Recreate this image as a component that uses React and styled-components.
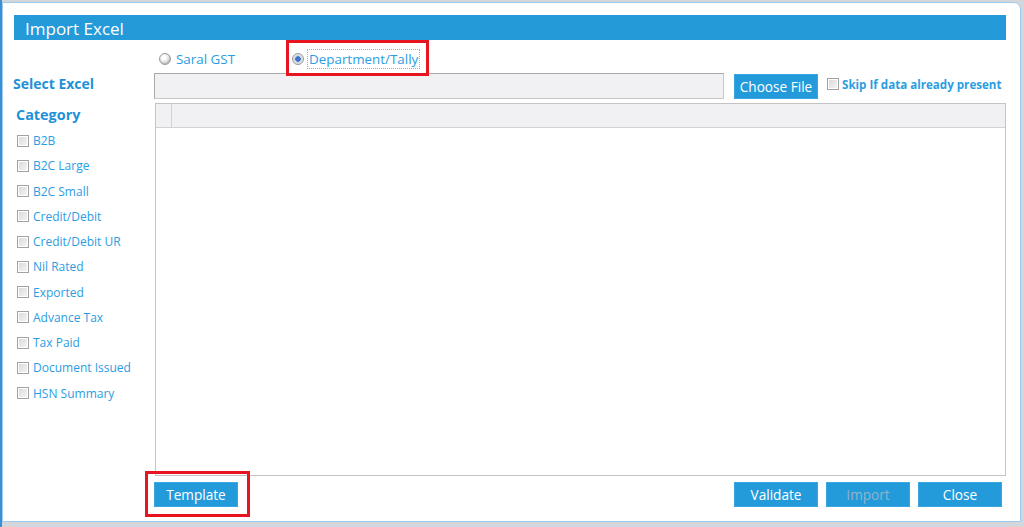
import React from "react";
import styled, { createGlobalStyle } from "styled-components";

const GlobalStyle = createGlobalStyle`
  html, body {
    margin: 0;
    padding: 0;
    background: #d3d7dc;
    font-family: "Open Sans", "Noto Sans", sans-serif;
  }
  body {
    width: 1024px;
    height: 527px;
    overflow: hidden;
    border-left: 2px solid #3d8fd3;
    box-sizing: border-box;
  }
`;

const categories = [
  "B2B",
  "B2C Large",
  "B2C Small",
  "Credit/Debit",
  "Credit/Debit UR",
  "Nil Rated",
  "Exported",
  "Advance Tax",
  "Tax Paid",
  "Document Issued",
  "HSN Summary",
];

function App() {
  return (
    <>
      <GlobalStyle />
      <Window>
        <TitleBar>Import Excel</TitleBar>
        <Body>
          <Spacer />
          <RadioRow>
            <RadioOption>
              <Radio />
              <RadioLabel>Saral GST</RadioLabel>
            </RadioOption>
            <Highlight>
              <RadioOption>
                <Radio checked />
                <RadioLabel focused>Department/Tally</RadioLabel>
              </RadioOption>
            </Highlight>
          </RadioRow>

          <SideLabel>Select Excel</SideLabel>
          <FileRow>
            <FileInput />
            <Button>Choose File</Button>
            <SkipOption>
              <Check />
              <SkipText>Skip If data already present</SkipText>
            </SkipOption>
          </FileRow>

          <CategoryList>
            <CategoryTitle>Category</CategoryTitle>
            {categories.map((c) => (
              <CategoryItem key={c}>
                <Check />
                <span>{c}</span>
              </CategoryItem>
            ))}
          </CategoryList>
          <DataGrid>
            <GridHeader>
              <RowHeadCell />
              <HeadCell />
            </GridHeader>
          </DataGrid>

          <Spacer />
          <Footer>
            <Highlight footer>
              <Button>Template</Button>
            </Highlight>
            <Actions>
              <Button>Validate</Button>
              <Button disabled>Import</Button>
              <Button>Close</Button>
            </Actions>
          </Footer>
        </Body>
      </Window>
    </>
  );
}

const Window = styled.div`
  box-sizing: border-box;
  margin: 2px 0 0 0;
  width: 1019px;
  height: 520px;
  background: #fff;
  border: 1px solid #9dc9ec;
  border-radius: 0 7px 0 0;
  padding: 12px 14px 0 11px;
  display: flex;
  flex-direction: column;
`;

const TitleBar = styled.div`
  height: 25px;
  background: #249ad9;
  color: #fff;
  font-size: 17px;
  line-height: 28px;
  padding-left: 11px;
`;

const Body = styled.div`
  display: grid;
  grid-template-columns: 141px 1fr;
  grid-template-rows: 33px 30px 373px 46px;
`;

const Spacer = styled.div``;

const RadioRow = styled.div`
  display: flex;
  align-items: flex-start;
  padding-left: 4px;
  gap: 50px;
`;

const RadioOption = styled.label`
  display: flex;
  align-items: center;
  gap: 4px;
  height: 20px;
  margin-top: 9px;
`;

const Radio = styled.span`
  box-sizing: border-box;
  width: 12px;
  height: 12px;
  border-radius: 50%;
  border: 1px solid #9a9a9a;
  background: ${(p) =>
    p.checked
      ? "radial-gradient(circle, #3f74c9 0 2.5px, #c9d4e6 3px, #e6e6e6 5px)"
      : "radial-gradient(circle at 40% 35%, #ffffff 0 2px, #d9d9d9 5px, #bdbdbd 6px)"};
`;

const RadioLabel = styled.span`
  font-size: 13.4px;
  color: #2b9de2;
  padding: 0 1px;
  outline: ${(p) => (p.focused ? "1px dotted #7fb7e6" : "none")};
`;

const Highlight = styled.div`
  position: relative;
  z-index: 2;
  border: 3px solid #e8141f;
  padding: ${(p) => (p.footer ? "8px 9px 7px 6px" : "0 7px 0 3px")};
  margin: ${(p) => (p.footer ? "-5px 0 0 -10px" : "0")};
  height: ${(p) => (p.footer ? "25px" : "30px")};
  & > label {
    margin-top: 6px;
  }
`;

const SideLabel = styled.div`
  font-size: 14px;
  font-weight: bold;
  color: #1f91d8;
  margin-left: -1px;
  margin-top: 1px;
`;

const FileRow = styled.div`
  display: flex;
  align-items: center;
  height: 26px;
  margin-left: -1px;
`;

const FileInput = styled.div`
  box-sizing: border-box;
  width: 570px;
  height: 26px;
  background: #f1f1f3;
  border: 1px solid #a9a9a9;
  border-right-color: #c8c8c8;
  border-bottom-color: #c8c8c8;
  margin-right: 10px;
`;

const Button = styled.button`
  box-sizing: border-box;
  width: 84px;
  height: 25px;
  border: 1px solid #3aa6e0;
  background: #239bdb;
  color: ${(p) => (p.disabled ? "#8fb4cc" : "#fff")};
  font-family: "Open Sans", "Noto Sans", sans-serif;
  font-size: 13.6px;
  padding: 0;
  cursor: pointer;
`;

const SkipOption = styled.div`
  display: flex;
  align-items: center;
  gap: 3px;
  margin-left: 9px;
  margin-top: -4px;
`;

const Check = styled.span`
  box-sizing: border-box;
  display: inline-block;
  flex: none;
  width: 12px;
  height: 12px;
  border: 1px solid #a2a2a2;
  background: linear-gradient(135deg, #d8d8d8, #f7f7f7);
  box-shadow: inset 0 0 0 1px #fff;
`;

const SkipText = styled.span`
  font-size: 11.6px;
  font-weight: bold;
  color: #2b9de2;
`;

const CategoryList = styled.div`
  display: flex;
  flex-direction: column;
`;

const CategoryTitle = styled.div`
  font-size: 14.4px;
  font-weight: bold;
  color: #1f91d8;
  height: 23px;
  padding-top: 2px;
  padding-left: 2px;
`;

const CategoryItem = styled.div`
  display: flex;
  align-items: center;
  gap: 4px;
  height: 25.25px;
  padding-left: 3px;
  font-size: 12px;
  color: #2b9de2;
  &:first-of-type {
    margin-top: -1px;
  }
`;

const DataGrid = styled.div`
  box-sizing: border-box;
  border: 1px solid #c4c4c4;
  height: 373px;
  background: #fff;
`;

const GridHeader = styled.div`
  display: flex;
  height: 23px;
  background: #f1f1f3;
  border-bottom: 1px solid #d2d2d2;
`;

const RowHeadCell = styled.div`
  width: 15px;
  border-right: 1px solid #d2d2d2;
`;

const HeadCell = styled.div`
  flex: 1;
`;

const Footer = styled.div`
  display: flex;
  align-items: flex-start;
  justify-content: space-between;
  margin-right: 4px;
`;

const Actions = styled.div`
  display: flex;
  gap: 8px;
  margin-top: 6px;
`;

export default App;
